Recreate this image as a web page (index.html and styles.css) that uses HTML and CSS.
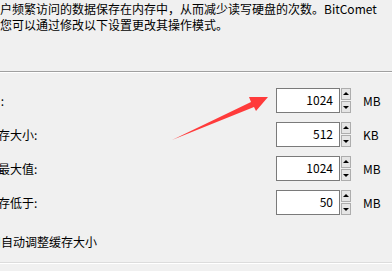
FILE: index.html
```html
<!DOCTYPE html>
<html lang="zh-CN">
<head>
    <meta charset="UTF-8">
    <meta name="viewport" content="width=device-width, initial-scale=1.0">
    <title>磁盘缓存</title>
    <link rel="stylesheet" href="styles.css">
</head>
<body>
    <div class="page">
        <p class="desc">户频繁访问的数据保存在内存中，从而减少读写硬盘的次数。BitComet<br>您可以通过修改以下设置更改其操作模式。</p>

        <div class="group">
            <div class="row">
                <span class="label">最小缓存 :</span>
                <div class="box">1024</div>
                <div class="spin"><span class="up"></span><span class="down"></span></div>
                <span class="unit">MB</span>
            </div>
            <div class="row">
                <span class="label">磁盘读缓存大小:</span>
                <div class="box">512</div>
                <div class="spin"><span class="up"></span><span class="down"></span></div>
                <span class="unit">KB</span>
            </div>
            <div class="row">
                <span class="label">磁盘缓存最大值:</span>
                <div class="box">1024</div>
                <div class="spin"><span class="up"></span><span class="down"></span></div>
                <span class="unit">MB</span>
            </div>
            <div class="row">
                <span class="label">当可用内存低于:</span>
                <div class="box">50</div>
                <div class="spin"><span class="up"></span><span class="down"></span></div>
                <span class="unit">MB</span>
            </div>

            <label class="check">
                <span class="checkbox"></span>
                <span>启用自动调整缓存大小</span>
            </label>
        </div>

        <div class="bottom-line"></div>

        <!-- 红色箭头 -->
        <svg class="arrow" width="392" height="271" viewBox="0 0 392 271">
            <polygon points="172,140 251,102 249,97 268,97 256,111 254,107" fill="#ff3b3b"/>
        </svg>
    </div>
</body>
</html>
```

FILE: styles.css
```css
body {
    margin: 0;
    background: #f0f0f0;
    font-family: "Noto Sans CJK SC", "Microsoft YaHei", sans-serif;
    font-size: 12px;
    color: #000;
    overflow: hidden;
}

.page {
    position: relative;
    width: 392px;
    height: 271px;
    overflow: hidden;
}

/* Descrição */
.desc {
    margin: 0;
    padding-top: 1px;
    line-height: 16px;
    white-space: nowrap;
}

/* Grupo */
.group {
    margin-top: 38px;
    border-top: 1px solid #a0a0a0;
    box-shadow: inset 0 1px 0 #fff;
    padding-top: 16px;
    margin-left: -50px;
}

.row {
    display: flex;
    align-items: center;
    height: 25px;
    margin-bottom: 9px;
}

.label {
    width: 326px;
    white-space: nowrap;
}

.box {
    box-sizing: border-box;
    width: 64px;
    height: 25px;
    background: #fff;
    border: 1px solid #7a7a7a;
    text-align: right;
    padding-right: 6px;
    line-height: 22px;
}

.spin {
    display: flex;
    flex-direction: column;
    justify-content: space-between;
    height: 25px;
    margin-left: 1px;
}

.spin span {
    box-sizing: border-box;
    position: relative;
    width: 10px;
    height: 12px;
    background: #e5e5e5;
    border: 1px solid #adadad;
}

.spin span::before {
    content: "";
    position: absolute;
    left: 1px;
    border-left: 3px solid transparent;
    border-right: 3px solid transparent;
}

.spin .up::before {
    top: 3px;
    border-bottom: 3px solid #000;
}

.spin .down::before {
    top: 4px;
    border-top: 3px solid #000;
}

.unit {
    margin-left: 12px;
}

/* Caixa de seleção */
.check {
    display: flex;
    align-items: center;
    gap: 4px;
    height: 16px;
    margin-top: 18px;
    padding-left: 10px;
    white-space: nowrap;
}

.checkbox {
    box-sizing: border-box;
    width: 13px;
    height: 13px;
    background: #fff;
    border: 1px solid #333;
}

.bottom-line {
    margin-top: 13px;
    border-top: 1px solid #dcdcdc;
    border-bottom: 1px solid #fff;
}

.arrow {
    position: absolute;
    top: 0;
    left: 0;
    pointer-events: none;
}
```
